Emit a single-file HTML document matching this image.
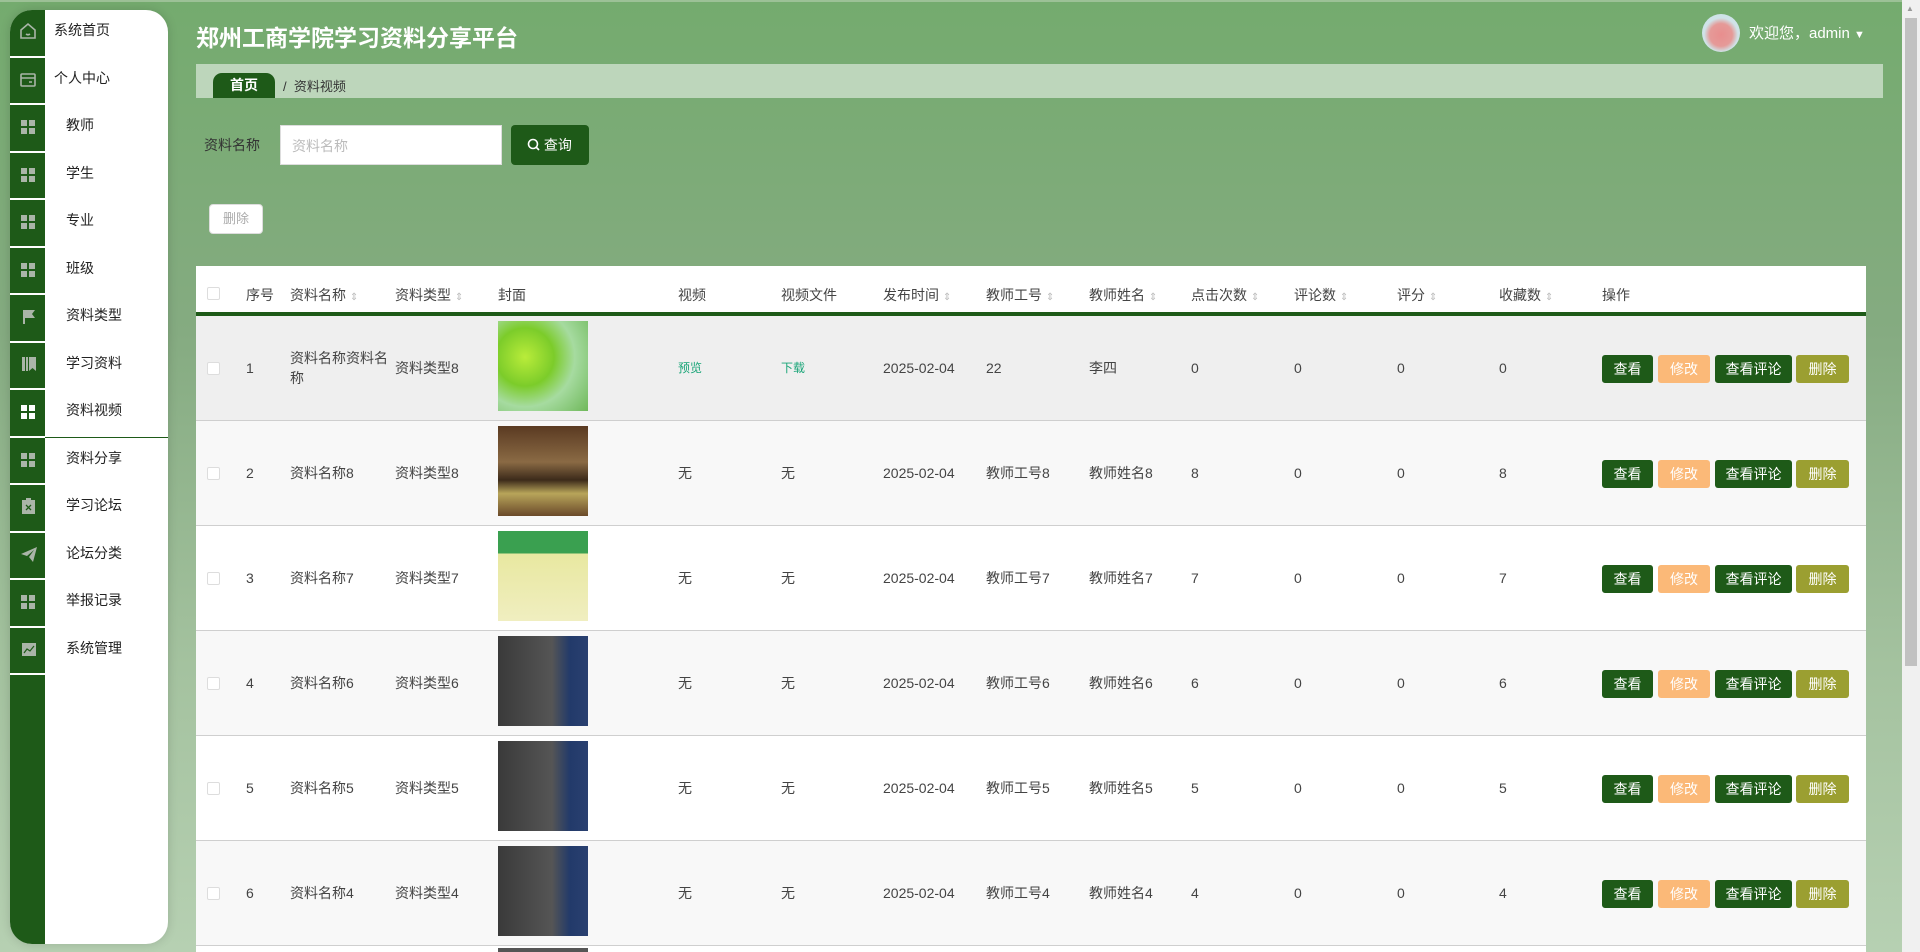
<!DOCTYPE html>
<html><head><meta charset="utf-8"><style>
*{margin:0;padding:0;box-sizing:border-box}
body{width:1920px;height:952px;overflow:hidden;position:relative;font-family:"Liberation Sans","Noto Sans CJK SC",sans-serif;background:linear-gradient(180deg,#74ab6e 0%,#85ab81 35%,#a4c29f 70%,#b6d0b2 100%);color:#333}
.abs{position:absolute}
.side{left:10px;top:10px;width:158px;height:934px;background:#fff;border-radius:22px;overflow:hidden;box-shadow:0 0 10px rgba(0,0,0,.15)}
.strip{position:absolute;left:0;top:0;width:35px;height:100%;background:#1e5a18}
.mi{position:absolute;left:0;width:158px;height:47.5px;font-size:14px;color:#222}
.mi .ic{position:absolute;left:0;top:0;width:35px;height:47.5px;border-bottom:2px solid #fff}
.mi span{position:absolute;top:10px}
.g{position:absolute;left:11px;top:15px;width:14px;height:14px;background:
linear-gradient(#aab5a8,#aab5a8) 0 0/6px 6px no-repeat,linear-gradient(#aab5a8,#aab5a8) 8px 0/6px 6px no-repeat,linear-gradient(#aab5a8,#aab5a8) 0 8px/6px 6px no-repeat,linear-gradient(#aab5a8,#aab5a8) 8px 8px/6px 6px no-repeat}
.th{position:absolute;top:19px;font-size:14px;color:#444}
.s{color:#bbb;font-size:10px}
.row{position:absolute;left:196px;width:1670px;height:105px;border-bottom:1px solid #cfcfcf}
.c{position:absolute;top:0;height:104px;display:flex;align-items:center;font-size:14px;color:#444;line-height:20px}
.cb{position:absolute;left:11px;top:46px;width:13px;height:13px;border:1px solid #ddd;background:#fff;border-radius:2px}
.img{position:absolute;left:302px;top:5px;width:90px;height:90px}
.b{position:absolute;top:39px;height:28px;border-radius:3px;color:#fff;font-size:14px;text-align:center;line-height:28px}
</style></head><body>
<div class="abs" style="left:0;top:0;width:1920px;height:2px;background:#9cc196"></div>
<div class="abs side">
<div class="strip"></div>
<div class="mi" style="top:0"><div class="ic"><svg class="abs" style="left:8px;top:11px" width="20" height="20" viewBox="0 0 20 20" fill="none" stroke="#aab5a8" stroke-width="1.6"><path d="M3 9L10 3l7 6v8H3z"/><path d="M8 13q2 1.5 4 0"/></svg></div><span style="left:44px">系统首页</span></div>
<div class="mi" style="top:47.5px"><div class="ic"><svg class="abs" style="left:8px;top:12px" width="20" height="20" viewBox="0 0 20 20" fill="none" stroke="#aab5a8" stroke-width="1.6"><rect x="3" y="4" width="14" height="12" rx="1"/><path d="M3 8h14M11 12h3"/></svg></div><span style="left:44px">个人中心</span></div>
<div class="mi" style="top:95px"><div class="ic"><div class="g"></div></div><span style="left:56px">教师</span></div>
<div class="mi" style="top:142.5px"><div class="ic"><div class="g"></div></div><span style="left:56px">学生</span></div>
<div class="mi" style="top:190px"><div class="ic"><div class="g"></div></div><span style="left:56px">专业</span></div>
<div class="mi" style="top:237.5px"><div class="ic"><div class="g"></div></div><span style="left:56px">班级</span></div>
<div class="mi" style="top:285px"><div class="ic"><svg class="abs" style="left:12px;top:14px" width="14" height="16" viewBox="0 0 14 16"><path d="M1 1h2v14H1zM3 1h10l-3 4 3 4H3z" fill="#aab5a8"/></svg></div><span style="left:56px">资料类型</span></div>
<div class="mi" style="top:332.5px"><div class="ic"><svg class="abs" style="left:12px;top:14px" width="14" height="14" viewBox="0 0 14 14"><path d="M0 0h3v14H0zM4 0h2v14H4zM7 0h7v14l-3.5-3L7 14z" fill="#aab5a8"/></svg></div><span style="left:56px">学习资料</span></div>
<div class="mi" style="top:380px;border-bottom:1px solid #1e5a18"><div class="ic"><div class="g" style="filter:brightness(2)"></div></div><span style="left:56px">资料视频</span></div>
<div class="mi" style="top:427.5px"><div class="ic"><div class="g"></div></div><span style="left:56px">资料分享</span></div>
<div class="mi" style="top:475px"><div class="ic"><svg class="abs" style="left:12px;top:13px" width="13" height="16" viewBox="0 0 13 16"><path d="M0 2h13v14H0z" fill="#aab5a8"/><rect x="4" y="0" width="5" height="3" fill="#aab5a8"/><path d="M4 7l5 5M9 7l-5 5" stroke="#1e5a18" stroke-width="1.3"/></svg></div><span style="left:56px">学习论坛</span></div>
<div class="mi" style="top:522.5px"><div class="ic"><svg class="abs" style="left:11px;top:14px" width="16" height="15" viewBox="0 0 16 15"><path d="M0 7L16 0 12 15 8 10 13 3 6 9z" fill="#aab5a8"/></svg></div><span style="left:56px">论坛分类</span></div>
<div class="mi" style="top:570px"><div class="ic"><div class="g"></div></div><span style="left:56px">举报记录</span></div>
<div class="mi" style="top:617.5px"><div class="ic"><svg class="abs" style="left:12px;top:15px" width="14" height="13" viewBox="0 0 14 13"><rect width="14" height="13" fill="#aab5a8"/><path d="M2 10l3-4 3 2 4-5" stroke="#1e5a18" fill="none" stroke-width="1.2"/></svg></div><span style="left:56px">系统管理</span></div>
</div>

<div class="abs" style="left:196px;top:19px;font-size:23px;font-weight:bold;color:#fff">郑州工商学院学习资料分享平台</div>
<div class="abs" style="left:1702px;top:14px;width:38px;height:38px;border-radius:50%;background:radial-gradient(circle at 50% 55%,#e88e8e 0,#e59a98 40%,#cfe3e8 60%)"></div>
<div class="abs" style="left:1749px;top:22px;font-size:15px;color:#fff">欢迎您，admin <span style="font-size:11px">▼</span></div>

<div class="abs" style="left:196px;top:64px;width:1687px;height:34px;background:#bdd6bb"></div>
<div class="abs" style="left:213px;top:73px;width:62px;height:25px;background:#1e5a18;border-radius:9px 9px 0 0;color:#fff;font-size:14px;text-align:center;line-height:25px;font-weight:bold">首页</div>
<div class="abs" style="left:283px;top:76px;font-size:13px;color:#333">/&nbsp; 资料视频</div>

<div class="abs" style="left:204px;top:135px;font-size:14px;color:#333">资料名称</div>
<div class="abs" style="left:280px;top:125px;width:222px;height:40px;background:#fff;border:1px solid #ddd;font-size:14px;color:#bbb;padding:10px 11px">资料名称</div>
<div class="abs" style="left:511px;top:125px;width:78px;height:40px;background:#1e5a18;border-radius:4px;color:#fff;font-size:14px;line-height:40px;padding-left:16px"><svg width="13" height="13" viewBox="0 0 13 13" style="vertical-align:-1px" fill="none" stroke="#fff" stroke-width="1.6"><circle cx="6" cy="6" r="4.5"/><path d="M9.5 9.5l2.5 2.5"/></svg> 查询</div>
<div class="abs" style="left:209px;top:204px;width:54px;height:30px;background:#fff;border:1px solid #ddd;border-radius:4px;color:#aaa;font-size:13px;text-align:center;line-height:28px">删除</div>

<div class="abs" style="left:196px;top:266px;width:1670px;height:686px;background:#fff"></div>
<div class="abs" style="left:196px;top:266px;width:1670px;height:48px">
<div class="cb" style="top:21px"></div>
<div class="th" style="left:50px">序号</div>
<div class="th" style="left:94px">资料名称 <span class="s">⇕</span></div>
<div class="th" style="left:199px">资料类型 <span class="s">⇕</span></div>
<div class="th" style="left:302px">封面</div>
<div class="th" style="left:482px">视频</div>
<div class="th" style="left:585px">视频文件</div>
<div class="th" style="left:687px">发布时间 <span class="s">⇕</span></div>
<div class="th" style="left:790px">教师工号 <span class="s">⇕</span></div>
<div class="th" style="left:893px">教师姓名 <span class="s">⇕</span></div>
<div class="th" style="left:995px">点击次数 <span class="s">⇕</span></div>
<div class="th" style="left:1098px">评论数 <span class="s">⇕</span></div>
<div class="th" style="left:1201px">评分 <span class="s">⇕</span></div>
<div class="th" style="left:1303px">收藏数 <span class="s">⇕</span></div>
<div class="th" style="left:1406px">操作</div>
</div>
<div class="abs" style="left:196px;top:312px;width:1670px;height:4px;background:#1e5a18"></div>

<div class="row" style="top:316px;background:#efefef">
<div class="cb"></div>
<div class="c" style="left:50px">1</div>
<div class="c" style="left:94px;width:100px">资料名称资料名称</div>
<div class="c" style="left:199px">资料类型8</div>
<div class="img" style="background:radial-gradient(circle at 30% 40%,#b9ec3a 0,#7ccc2a 35%,#a6dba0 60%,#6fb85a 100%)"></div>
<div class="c" style="left:482px;color:#1aa578;font-size:12px">预览</div>
<div class="c" style="left:585px;color:#1aa578;font-size:12px">下载</div>
<div class="c" style="left:687px">2025-02-04</div>
<div class="c" style="left:790px">22</div>
<div class="c" style="left:893px">李四</div>
<div class="c" style="left:995px">0</div><div class="c" style="left:1098px">0</div><div class="c" style="left:1201px">0</div><div class="c" style="left:1303px">0</div>
<div class="b" style="left:1406px;width:51px;background:#1e5a18">查看</div>
<div class="b" style="left:1462px;width:52px;background:#fbb978">修改</div>
<div class="b" style="left:1519px;width:77px;background:#1e5a18">查看评论</div>
<div class="b" style="left:1600px;width:53px;background:#9b9f31">删除</div>
</div>

<div class="row" style="top:421px;background:#f8f8f8">
<div class="cb"></div>
<div class="c" style="left:50px">2</div><div class="c" style="left:94px">资料名称8</div><div class="c" style="left:199px">资料类型8</div>
<div class="img" style="background:linear-gradient(180deg,#5a3a22 0,#8a6a44 40%,#3c2a1a 60%,#b8a55a 75%,#6a4a2a 100%)"></div>
<div class="c" style="left:482px">无</div><div class="c" style="left:585px">无</div><div class="c" style="left:687px">2025-02-04</div><div class="c" style="left:790px">教师工号8</div><div class="c" style="left:893px">教师姓名8</div>
<div class="c" style="left:995px">8</div><div class="c" style="left:1098px">0</div><div class="c" style="left:1201px">0</div><div class="c" style="left:1303px">8</div>
<div class="b" style="left:1406px;width:51px;background:#1e5a18">查看</div><div class="b" style="left:1462px;width:52px;background:#fbb978">修改</div><div class="b" style="left:1519px;width:77px;background:#1e5a18">查看评论</div><div class="b" style="left:1600px;width:53px;background:#9b9f31">删除</div>
</div>

<div class="row" style="top:526px;background:#fff">
<div class="cb"></div>
<div class="c" style="left:50px">3</div><div class="c" style="left:94px">资料名称7</div><div class="c" style="left:199px">资料类型7</div>
<div class="img" style="background:linear-gradient(180deg,#3aa050 0,#3aa050 25%,#e8e8a0 25%,#f0eec0 100%)"></div>
<div class="c" style="left:482px">无</div><div class="c" style="left:585px">无</div><div class="c" style="left:687px">2025-02-04</div><div class="c" style="left:790px">教师工号7</div><div class="c" style="left:893px">教师姓名7</div>
<div class="c" style="left:995px">7</div><div class="c" style="left:1098px">0</div><div class="c" style="left:1201px">0</div><div class="c" style="left:1303px">7</div>
<div class="b" style="left:1406px;width:51px;background:#1e5a18">查看</div><div class="b" style="left:1462px;width:52px;background:#fbb978">修改</div><div class="b" style="left:1519px;width:77px;background:#1e5a18">查看评论</div><div class="b" style="left:1600px;width:53px;background:#9b9f31">删除</div>
</div>

<div class="row" style="top:631px;background:#f8f8f8">
<div class="cb"></div>
<div class="c" style="left:50px">4</div><div class="c" style="left:94px">资料名称6</div><div class="c" style="left:199px">资料类型6</div>
<div class="img" style="background:linear-gradient(90deg,#3a3a3a 0,#555 60%,#223a6a 80%,#2a4070 100%)"></div>
<div class="c" style="left:482px">无</div><div class="c" style="left:585px">无</div><div class="c" style="left:687px">2025-02-04</div><div class="c" style="left:790px">教师工号6</div><div class="c" style="left:893px">教师姓名6</div>
<div class="c" style="left:995px">6</div><div class="c" style="left:1098px">0</div><div class="c" style="left:1201px">0</div><div class="c" style="left:1303px">6</div>
<div class="b" style="left:1406px;width:51px;background:#1e5a18">查看</div><div class="b" style="left:1462px;width:52px;background:#fbb978">修改</div><div class="b" style="left:1519px;width:77px;background:#1e5a18">查看评论</div><div class="b" style="left:1600px;width:53px;background:#9b9f31">删除</div>
</div>

<div class="row" style="top:736px;background:#fff">
<div class="cb"></div>
<div class="c" style="left:50px">5</div><div class="c" style="left:94px">资料名称5</div><div class="c" style="left:199px">资料类型5</div>
<div class="img" style="background:linear-gradient(90deg,#3a3a3a 0,#555 60%,#223a6a 80%,#2a4070 100%)"></div>
<div class="c" style="left:482px">无</div><div class="c" style="left:585px">无</div><div class="c" style="left:687px">2025-02-04</div><div class="c" style="left:790px">教师工号5</div><div class="c" style="left:893px">教师姓名5</div>
<div class="c" style="left:995px">5</div><div class="c" style="left:1098px">0</div><div class="c" style="left:1201px">0</div><div class="c" style="left:1303px">5</div>
<div class="b" style="left:1406px;width:51px;background:#1e5a18">查看</div><div class="b" style="left:1462px;width:52px;background:#fbb978">修改</div><div class="b" style="left:1519px;width:77px;background:#1e5a18">查看评论</div><div class="b" style="left:1600px;width:53px;background:#9b9f31">删除</div>
</div>

<div class="row" style="top:841px;background:#f8f8f8">
<div class="cb"></div>
<div class="c" style="left:50px">6</div><div class="c" style="left:94px">资料名称4</div><div class="c" style="left:199px">资料类型4</div>
<div class="img" style="background:linear-gradient(90deg,#3a3a3a 0,#555 60%,#223a6a 80%,#2a4070 100%)"></div>
<div class="c" style="left:482px">无</div><div class="c" style="left:585px">无</div><div class="c" style="left:687px">2025-02-04</div><div class="c" style="left:790px">教师工号4</div><div class="c" style="left:893px">教师姓名4</div>
<div class="c" style="left:995px">4</div><div class="c" style="left:1098px">0</div><div class="c" style="left:1201px">0</div><div class="c" style="left:1303px">4</div>
<div class="b" style="left:1406px;width:51px;background:#1e5a18">查看</div><div class="b" style="left:1462px;width:52px;background:#fbb978">修改</div><div class="b" style="left:1519px;width:77px;background:#1e5a18">查看评论</div><div class="b" style="left:1600px;width:53px;background:#9b9f31">删除</div>
</div>
<div class="abs" style="left:498px;top:948px;width:90px;height:4px;background:#555"></div>

<div class="abs" style="left:1902px;top:0;width:18px;height:952px;background:#f0f0f0"></div>
<div class="abs" style="left:1905px;top:18px;width:12px;height:648px;background:#c1c1c1"></div>
<div class="abs" style="left:1906px;top:4px;font-size:8px;color:#999">▲</div>
</body></html>
